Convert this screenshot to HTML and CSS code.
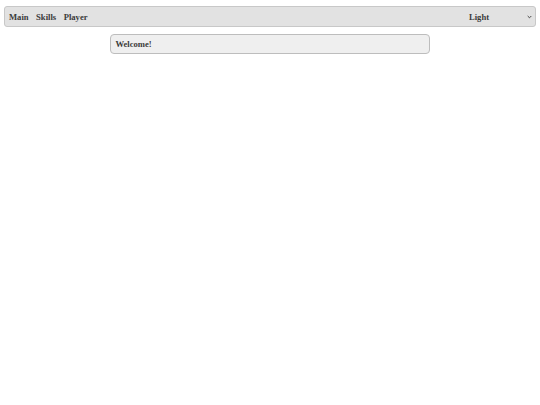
FILE: index.html
```html
<!DOCTYPE html>
<html>
<head>
<meta charset="utf-8">
<link rel="stylesheet" href="styles.css">
</head>
<body>
<nav class="topbar">
  <div class="links">
    <a class="link">Main</a>
    <a class="link">Skills</a>
    <a class="link">Player</a>
  </div>
  <div class="theme">
    <span class="theme-label">Light</span>
    <svg class="chev" width="5" height="4" viewBox="0 0 5 4"><path d="M0.7 1 L2.5 2.8 L4.3 1" fill="none" stroke="#444" stroke-width="1"/></svg>
  </div>
</nav>
<main class="content">
  <div class="welcome">Welcome!</div>
</main>
</body>
</html>
```
FILE: styles.css
```css
html, body {
  margin: 0;
  padding: 0;
  background: #ffffff;
}
body {
  padding: 6px 4px;
  font-family: "Liberation Serif", "Times New Roman", serif;
  font-weight: bold;
  font-size: 8.6px;
  color: #3a3a3a;
}
.topbar {
  display: flex;
  align-items: center;
  justify-content: space-between;
  height: 19px;
  background: #e2e2e2;
  border: 1px solid #c8c8c8;
  border-radius: 3px;
  padding: 0 3px 0 4px;
}
.links {
  display: flex;
  gap: 7.5px;
}
.link {
  color: #3a3a3a;
}
.theme {
  display: flex;
  align-items: center;
  width: 63px;
}
.theme-label {
  flex: 1;
}
.chev {
  display: block;
}
.content {
  display: flex;
  justify-content: center;
  margin-top: 7px;
}
.welcome {
  width: 60%;
  box-sizing: border-box;
  height: 20px;
  background: #efefef;
  border: 1.5px solid #bdbdbd;
  border-radius: 4px;
  padding: 0 4px;
  display: flex;
  align-items: center;
}
```
